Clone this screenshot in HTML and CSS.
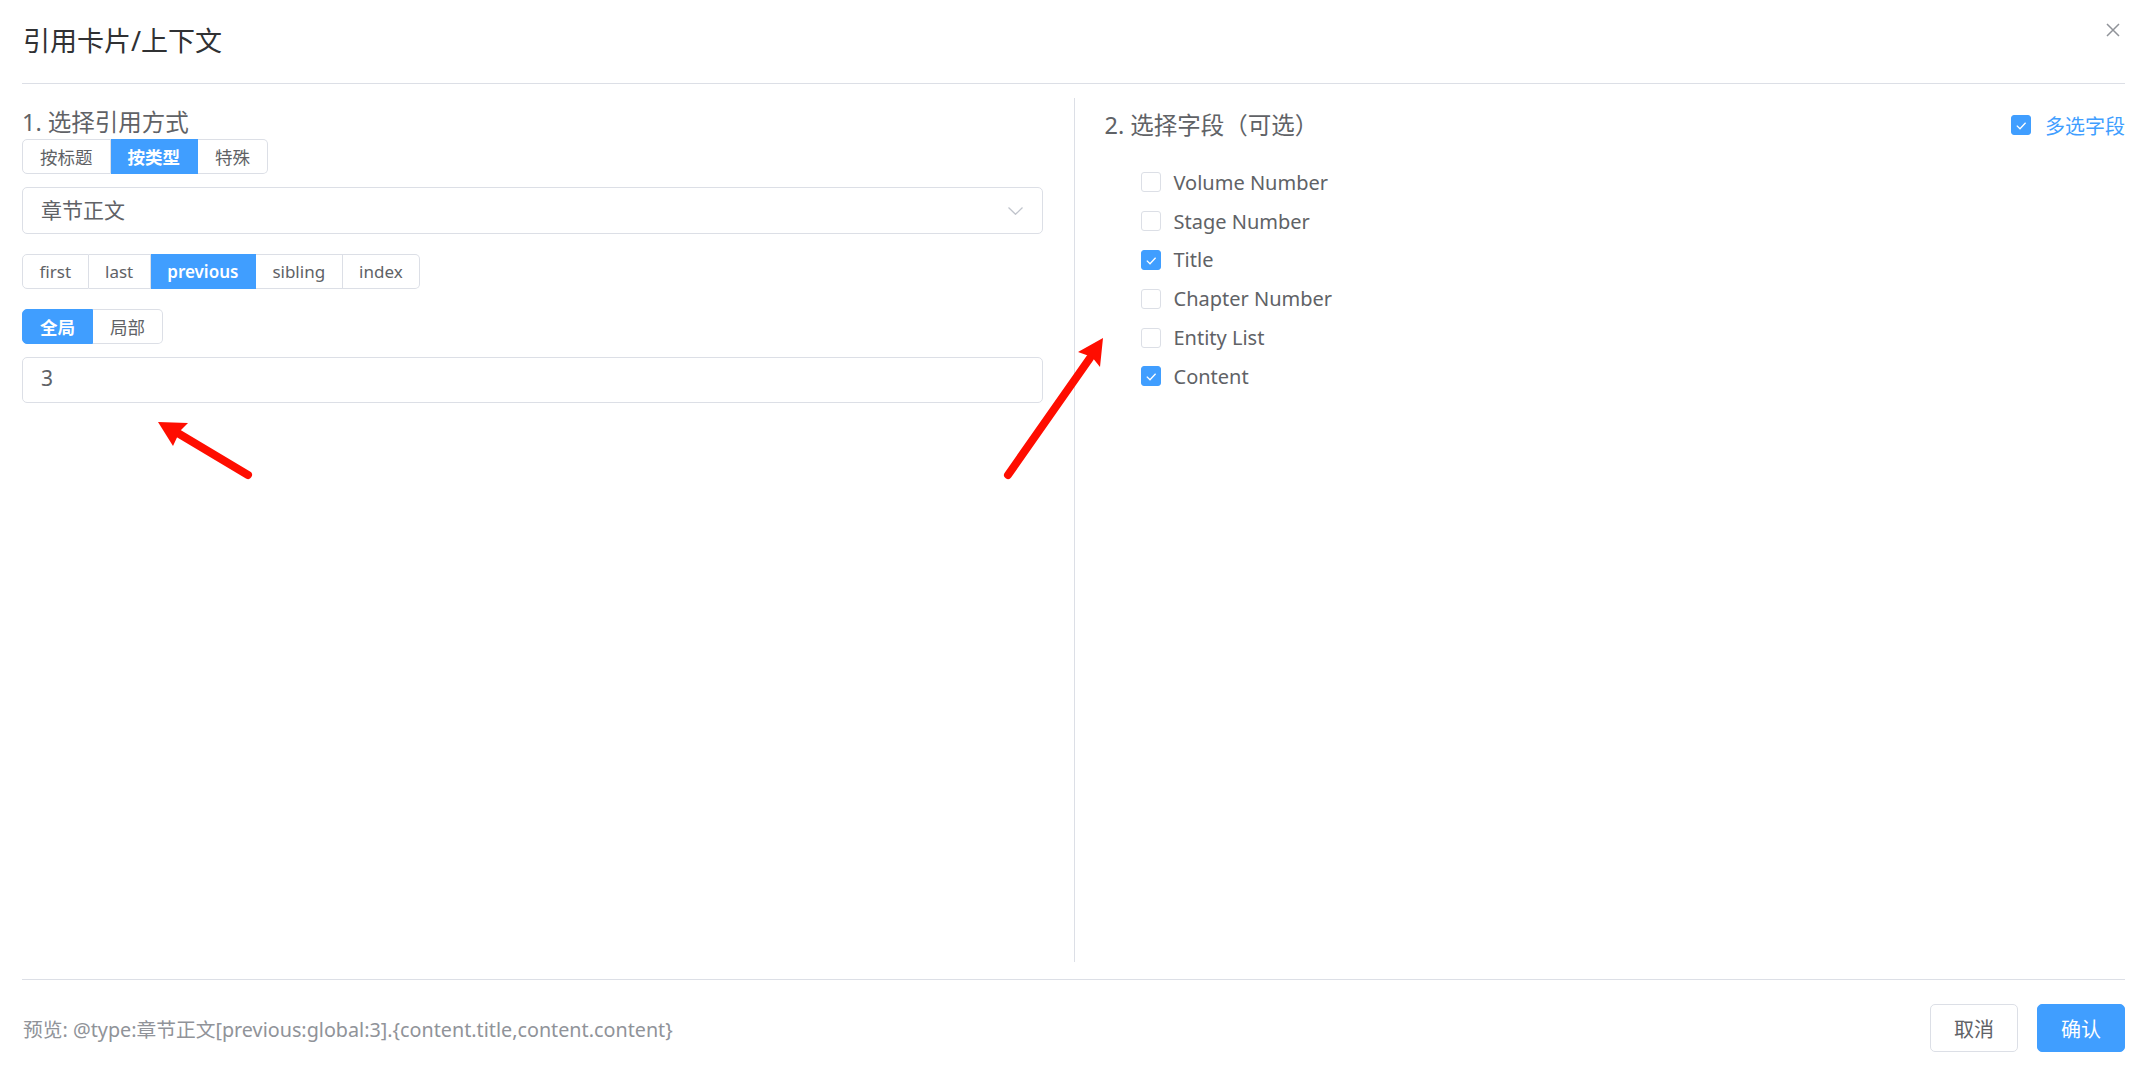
FILE: index.html
```html
<!DOCTYPE html>
<html lang="zh-CN">
<head>
    <meta charset="UTF-8">
    <meta name="viewport" content="width=device-width, initial-scale=1.0">
    <title>引用卡片/上下文</title>
    <link rel="stylesheet" href="styles.css">
</head>
<body>
    <div class="dialog">
        <header class="dialog-header">
            <span class="dialog-title">引用卡片/上下文</span>
            <button class="close-btn" type="button">
                <svg width="14" height="14" viewBox="0 0 14 14">
                    <path d="M1 1 L13 13 M13 1 L1 13" stroke="#909399" stroke-width="1.5" fill="none"/>
                </svg>
            </button>
        </header>

        <div class="dialog-body">
            <section class="pane pane-left">
                <h3 class="pane-title">1. 选择引用方式</h3>
                <div class="radio-group mode-group">
                    <label class="radio-btn">按标题</label>
                    <label class="radio-btn active">按类型</label>
                    <label class="radio-btn">特殊</label>
                </div>

                <div class="select">
                    <span class="select-value">章节正文</span>
                    <svg width="15" height="8" viewBox="0 0 15 8">
                        <polyline points="0.5,0.5 7.5,7.3 14.5,0.5" stroke="#c0c4cc" stroke-width="1.3" fill="none"/>
                    </svg>
                </div>

                <div class="radio-group spaced latin-group">
                    <label class="radio-btn">first</label>
                    <label class="radio-btn">last</label>
                    <label class="radio-btn active">previous</label>
                    <label class="radio-btn">sibling</label>
                    <label class="radio-btn">index</label>
                </div>

                <div class="radio-group spaced">
                    <label class="radio-btn active">全局</label>
                    <label class="radio-btn">局部</label>
                </div>

                <input class="text-input" type="text" value="3">
            </section>

            <section class="pane pane-right">
                <div class="pane-head">
                    <h3 class="pane-title">2. 选择字段（可选）</h3>
                    <label class="checkbox multi">
                        <span class="check-box checked">
                            <svg width="18" height="18" viewBox="0 0 18 18"><polyline points="4.8,9.6 8,12.8 13.6,6.8" stroke="#fff" stroke-width="1.3" fill="none"/></svg>
                        </span>
                        <span class="check-label">多选字段</span>
                    </label>
                </div>

                <ul class="field-list">
                    <li class="checkbox"><span class="check-box"></span><span class="check-label">Volume Number</span></li>
                    <li class="checkbox"><span class="check-box"></span><span class="check-label">Stage Number</span></li>
                    <li class="checkbox">
                        <span class="check-box checked">
                            <svg width="18" height="18" viewBox="0 0 18 18"><polyline points="4.8,9.6 8,12.8 13.6,6.8" stroke="#fff" stroke-width="1.3" fill="none"/></svg>
                        </span>
                        <span class="check-label">Title</span>
                    </li>
                    <li class="checkbox"><span class="check-box"></span><span class="check-label">Chapter Number</span></li>
                    <li class="checkbox"><span class="check-box"></span><span class="check-label">Entity List</span></li>
                    <li class="checkbox">
                        <span class="check-box checked">
                            <svg width="18" height="18" viewBox="0 0 18 18"><polyline points="4.8,9.6 8,12.8 13.6,6.8" stroke="#fff" stroke-width="1.3" fill="none"/></svg>
                        </span>
                        <span class="check-label">Content</span>
                    </li>
                </ul>
            </section>
        </div>

        <footer class="dialog-footer">
            <span class="preview">预览: @type:章节正文[previous:global:3].{content.title,content.content}</span>
            <div class="footer-btns">
                <button class="btn" type="button">取消</button>
                <button class="btn btn-primary" type="button">确认</button>
            </div>
        </footer>
    </div>

    <!-- red annotation arrows drawn over the screenshot -->
    <svg class="annotations" width="2137" height="1070" viewBox="0 0 2137 1070">
        <line x1="248" y1="475" x2="176" y2="432" stroke="#ff0d00" stroke-width="8" stroke-linecap="round"/>
        <polygon points="158,422 188,423 180,431 173,446" fill="#ff0d00"/>
        <line x1="1008" y1="475" x2="1090" y2="358" stroke="#ff0d00" stroke-width="8" stroke-linecap="round"/>
        <polygon points="1103,338 1100,367 1092,357 1078,352" fill="#ff0d00"/>
    </svg>
</body>
</html>
```

FILE: styles.css
```css
body {
    margin: 0;
    padding: 0;
    background-color: #fff;
    font-family: "Noto Sans", "Noto Sans CJK SC", sans-serif;
    color: #606266;
}

.dialog {
    padding: 0 12px 0 22px;
}

.dialog-header {
    height: 78px;
    padding-bottom: 5px;
    display: flex;
    align-items: center;
    border-bottom: 1px solid #dcdfe6;
}

.dialog-title {
    font-size: 27px;
    color: #303133;
    padding-left: 1px;
}

.close-btn {
    position: absolute;
    top: 23px;
    right: 17px;
    width: 14px;
    height: 14px;
    padding: 0;
    border: none;
    background: none;
    display: block;
}

.close-btn svg {
    display: block;
}

.dialog-body {
    display: grid;
    grid-template-columns: 1fr 1fr;
    height: 864px;
    margin-top: 14px;
}

.pane-left {
    padding-right: 31px;
}

.pane-right {
    border-left: 1px solid #dcdfe6;
    padding-left: 30px;
}

.pane-title {
    margin: 0;
    padding-top: 8px;
    font-size: 23.5px;
    font-weight: normal;
    line-height: 32px;
    color: #606266;
}

/* radio button groups */
.radio-group {
    display: flex;
    width: fit-content;
}

.mode-group {
    margin-top: 1px;
}

.spaced {
    margin-top: 20px;
}

.radio-btn {
    height: 35px;
    box-sizing: border-box;
    padding: 0 17px 1px;
    display: flex;
    align-items: center;
    font-size: 17.5px;
    color: #606266;
    border: 1px solid #dcdfe6;
    border-left: none;
    background: #fff;
}

.latin-group .radio-btn {
    font-size: 17px;
    padding: 0 16.5px 1px;
}

.radio-btn:first-child {
    border-left: 1px solid #dcdfe6;
    border-radius: 5px 0 0 5px;
}

.radio-btn:last-child {
    border-radius: 0 5px 5px 0;
}

.radio-btn.active {
    background: #409eff;
    border-color: #409eff;
    color: #fff;
    font-weight: 600;
}

.select {
    margin-top: 13px;
    height: 47px;
    box-sizing: border-box;
    border: 1px solid #dcdfe6;
    border-radius: 5px;
    padding: 0 19px 0 18px;
    display: flex;
    align-items: center;
    justify-content: space-between;
    font-size: 21px;
}

.select-value {
    margin-bottom: 4px;
}

.select svg {
    display: block;
}

.text-input {
    display: block;
    margin-top: 13px;
    width: 100%;
    height: 46px;
    box-sizing: border-box;
    border: 1px solid #dcdfe6;
    border-radius: 5px;
    padding: 0 18px 4px;
    font-family: "Noto Sans", "Noto Sans CJK SC", sans-serif;
    font-size: 21px;
    color: #606266;
    outline: none;
}

/* right side */
.pane-head {
    display: flex;
    justify-content: space-between;
    align-items: center;
    padding-top: 3px;
}

.checkbox {
    display: flex;
    align-items: center;
}

.check-box {
    width: 20px;
    height: 20px;
    box-sizing: border-box;
    border: 1px solid #dcdfe6;
    border-radius: 3px;
    background: #fff;
    display: flex;
    align-items: center;
    justify-content: center;
}

.check-box.checked {
    background: #409eff;
    border-color: #409eff;
}

.check-box svg {
    display: block;
}

.check-label {
    margin-left: 13px;
    font-size: 20px;
    color: #606266;
}

.multi {
    padding-top: 8px;
}

.multi .check-label {
    margin-left: 14px;
    color: #409eff;
}

.field-list {
    list-style-type: none;
    margin: 22px 0 0 36px;
    padding: 0;
}

.field-list li {
    height: 38.8px;
}

/* footer */
.dialog-footer {
    margin-top: 17px;
    border-top: 1px solid #dcdfe6;
    padding-top: 24px;
    display: flex;
    justify-content: space-between;
    align-items: center;
}

.preview {
    font-size: 19.75px;
    color: #909399;
    padding-left: 1px;
}

.footer-btns {
    display: flex;
    gap: 19px;
}

.btn {
    height: 48px;
    padding: 0 23px;
    font-family: "Noto Sans", "Noto Sans CJK SC", sans-serif;
    font-size: 20px;
    color: #606266;
    background: #fff;
    border: 1px solid #dcdfe6;
    border-radius: 5px;
    cursor: pointer;
}

.btn-primary {
    background: #409eff;
    border-color: #409eff;
    color: #fff;
}

.annotations {
    position: absolute;
    top: 0;
    left: 0;
    pointer-events: none;
}
```
